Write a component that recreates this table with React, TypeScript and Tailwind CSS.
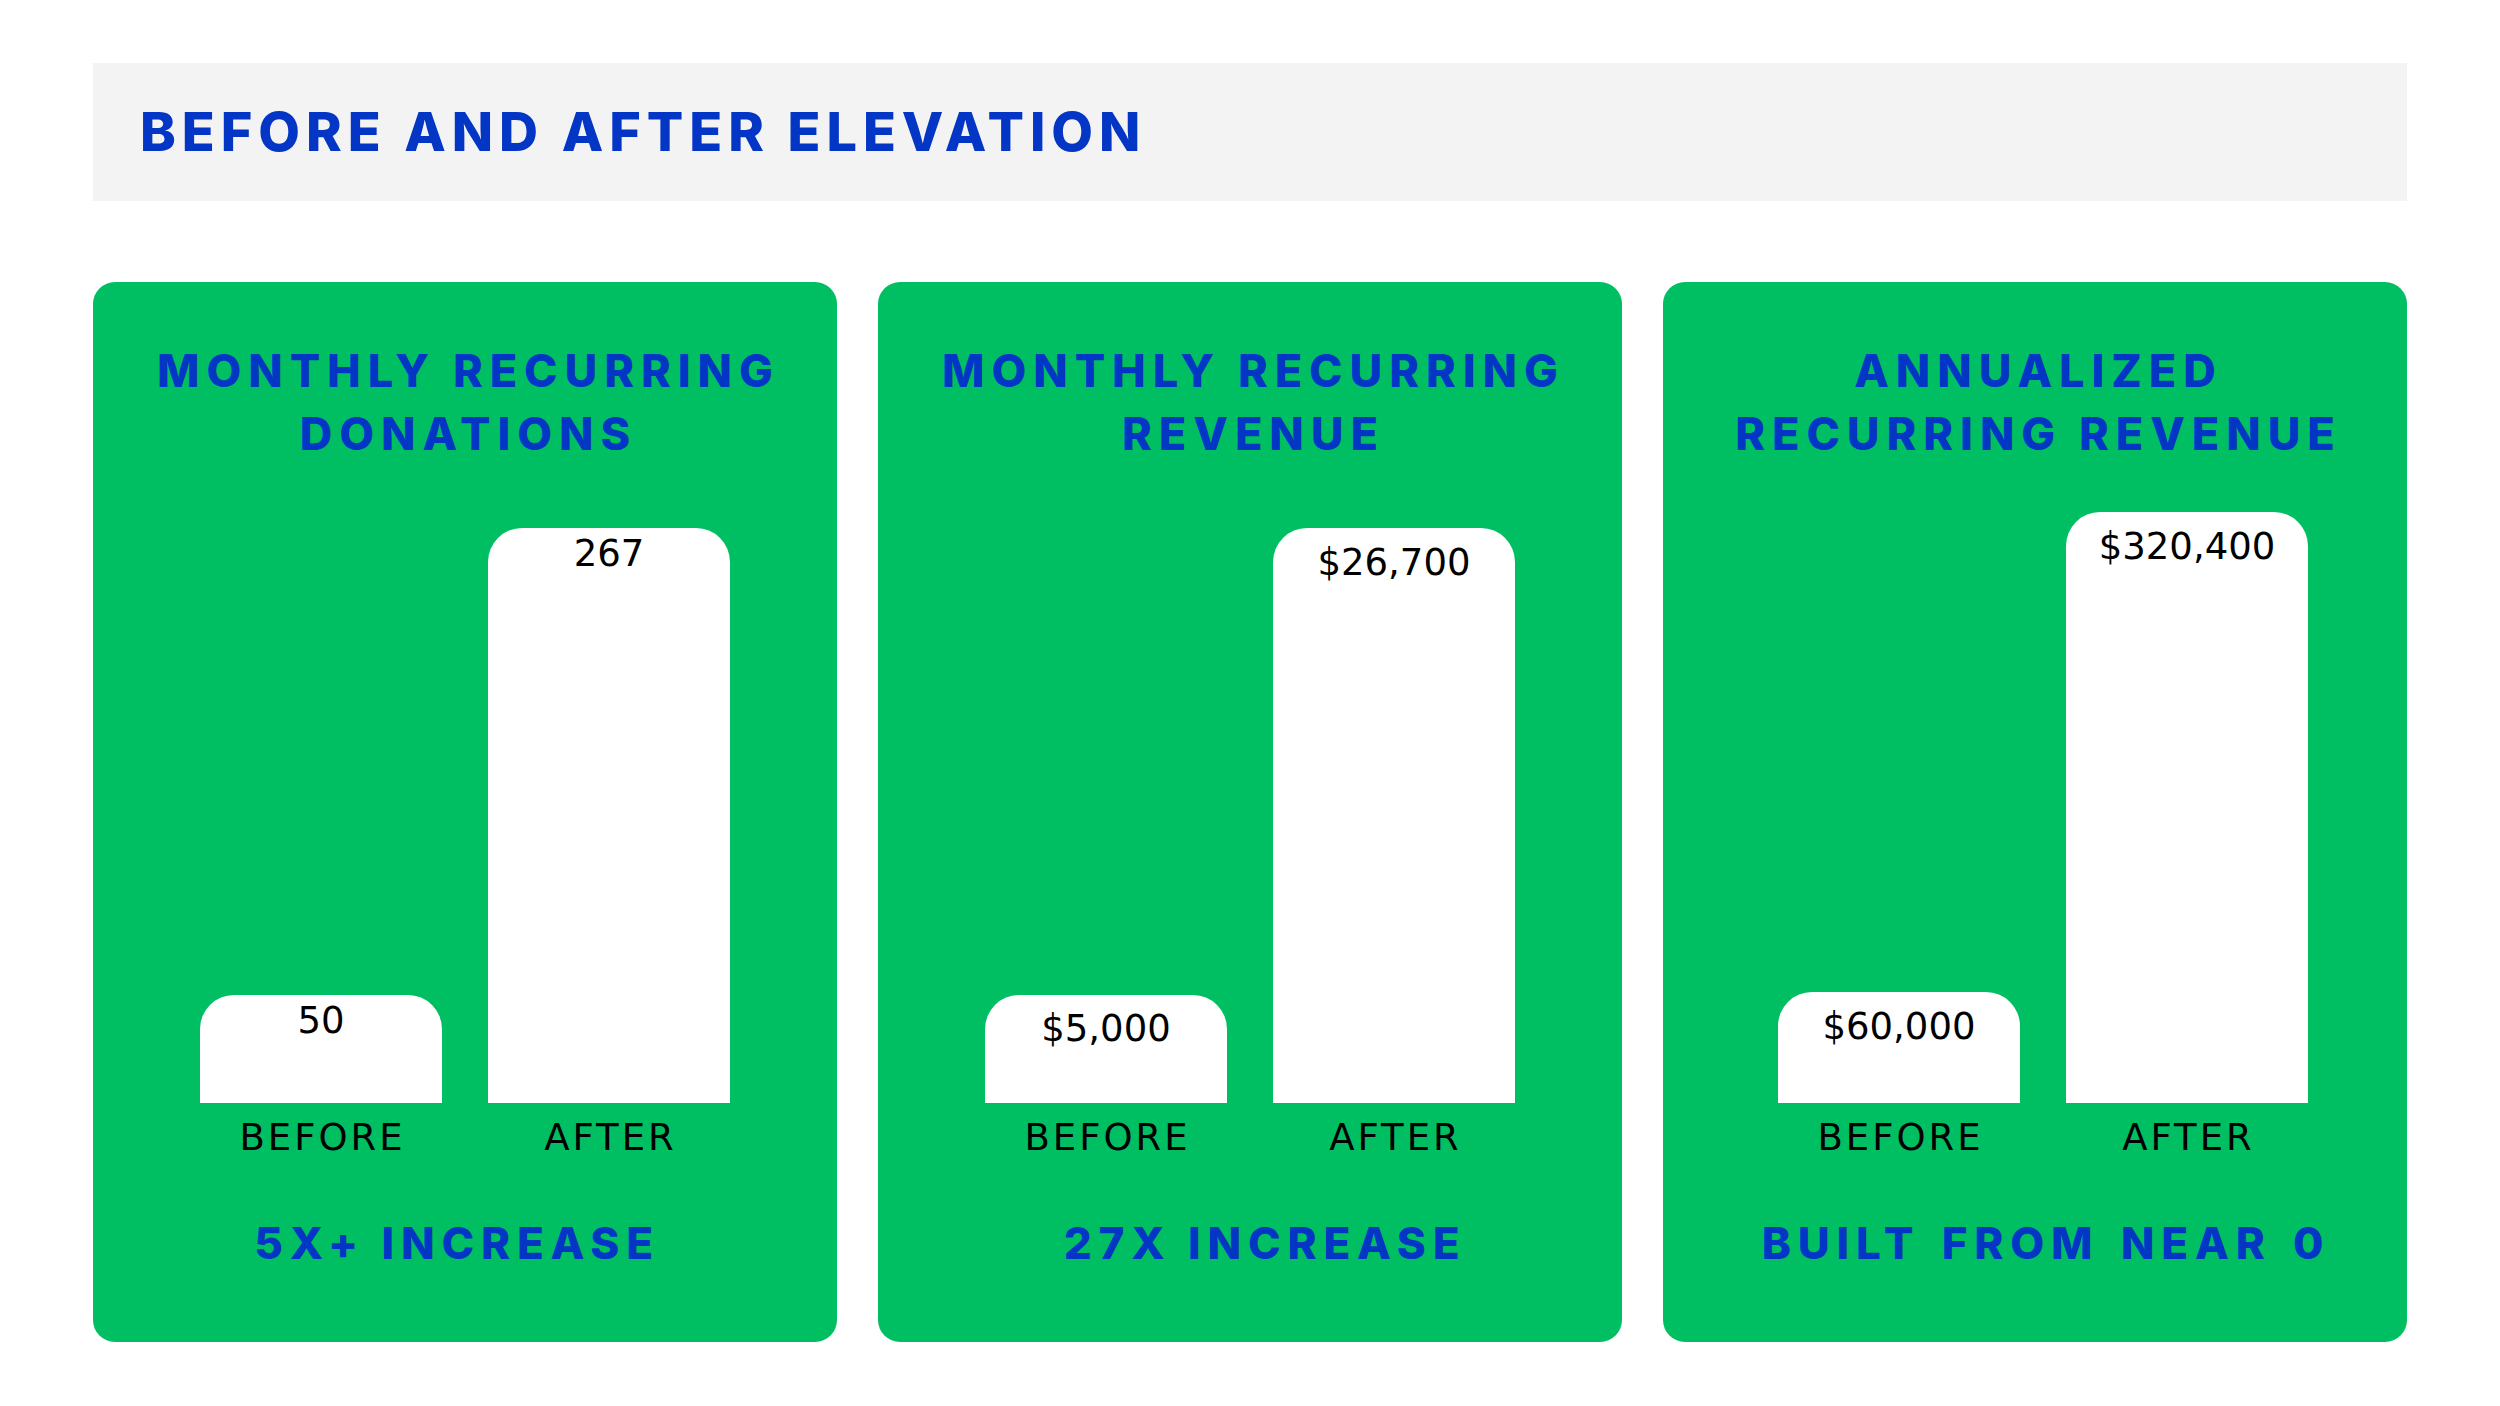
const cards = [
  {
    title: ["MONTHLY RECURRING", "DONATIONS"],
    before: { value: "50", height: "h-[108px]", pad: "pt-[7px]" },
    after: { value: "267", height: "h-[575px]", pad: "pt-[7px]" },
    chartShift: "pl-0",
    footer: "5X+ INCREASE",
    footerShift: "pr-[16px]",
  },
  {
    title: ["MONTHLY RECURRING", "REVENUE"],
    before: { value: "$5,000", height: "h-[108px]", pad: "pt-[15px]" },
    after: { value: "$26,700", height: "h-[575px]", pad: "pt-[16px]" },
    chartShift: "pl-0",
    footer: "27X INCREASE",
    footerShift: "pl-[30px]",
  },
  {
    title: ["ANNUALIZED", "RECURRING REVENUE"],
    before: { value: "$60,000", height: "h-[111px]", pad: "pt-[16px]" },
    after: { value: "$320,400", height: "h-[591px]", pad: "pt-[16px]" },
    chartShift: "pl-[16px]",
    footer: "BUILT FROM NEAR 0",
    footerShift: "pl-[22px] [word-spacing:5px]",
  },
];

type Bar = { value: string; height: string; pad: string };

const thin = { fontFamily: "'DejaVu Sans', 'Open Sans', sans-serif" };

function BarBlock({ bar }: { bar: Bar }) {
  return (
    <div className={`flex w-[242px] justify-center rounded-t-[34px] bg-white ${bar.height} ${bar.pad}`}>
      <span className="text-[37px] leading-none text-black" style={thin}>
        {bar.value}
      </span>
    </div>
  );
}

function Label({ text }: { text: string }) {
  return (
    <span
      className="w-[242px] pl-[0.08em] text-center text-[37px] leading-none tracking-[0.08em] text-black"
      style={thin}
    >
      {text}
    </span>
  );
}

export default function App() {
  return (
    <div
      className="h-[1406px] w-[2500px] bg-white pl-[93px] pt-[63px]"
      style={{ fontFamily: "Inter, 'Open Sans', sans-serif" }}
    >
      <div className="flex h-[138px] w-[2314px] items-center bg-[#f3f3f3] pl-[47px]">
        <h1 className="text-[54px] font-extrabold leading-none tracking-[0.11em] text-[#0436c6]">
          BEFORE AND AFTER ELEVATION
        </h1>
      </div>

      <div className="mt-[81px] flex gap-[41px]">
        {cards.map((c) => (
          <div
            key={c.footer}
            className="flex h-[1060px] w-[744px] flex-col items-center rounded-[22px] bg-[#00bf63] pt-[57px]"
          >
            <div className="pl-[0.155em] text-center text-[45px] font-extrabold leading-[63px] tracking-[0.155em] text-[#0436c6]">
              <div>{c.title[0]}</div>
              <div>{c.title[1]}</div>
            </div>

            <div className={`flex h-[638px] items-end gap-[46px] ${c.chartShift}`}>
              <BarBlock bar={c.before} />
              <BarBlock bar={c.after} />
            </div>
            <div className={`mt-[16px] flex gap-[46px] ${c.chartShift}`}>
              <Label text="BEFORE" />
              <Label text="AFTER" />
            </div>

            <div className={`mt-[65px] ${c.footerShift}`}>
              <span className="text-[44px] font-extrabold leading-none tracking-[0.155em] text-[#0436c6]">
                {c.footer}
              </span>
            </div>
          </div>
        ))}
      </div>
    </div>
  );
}
